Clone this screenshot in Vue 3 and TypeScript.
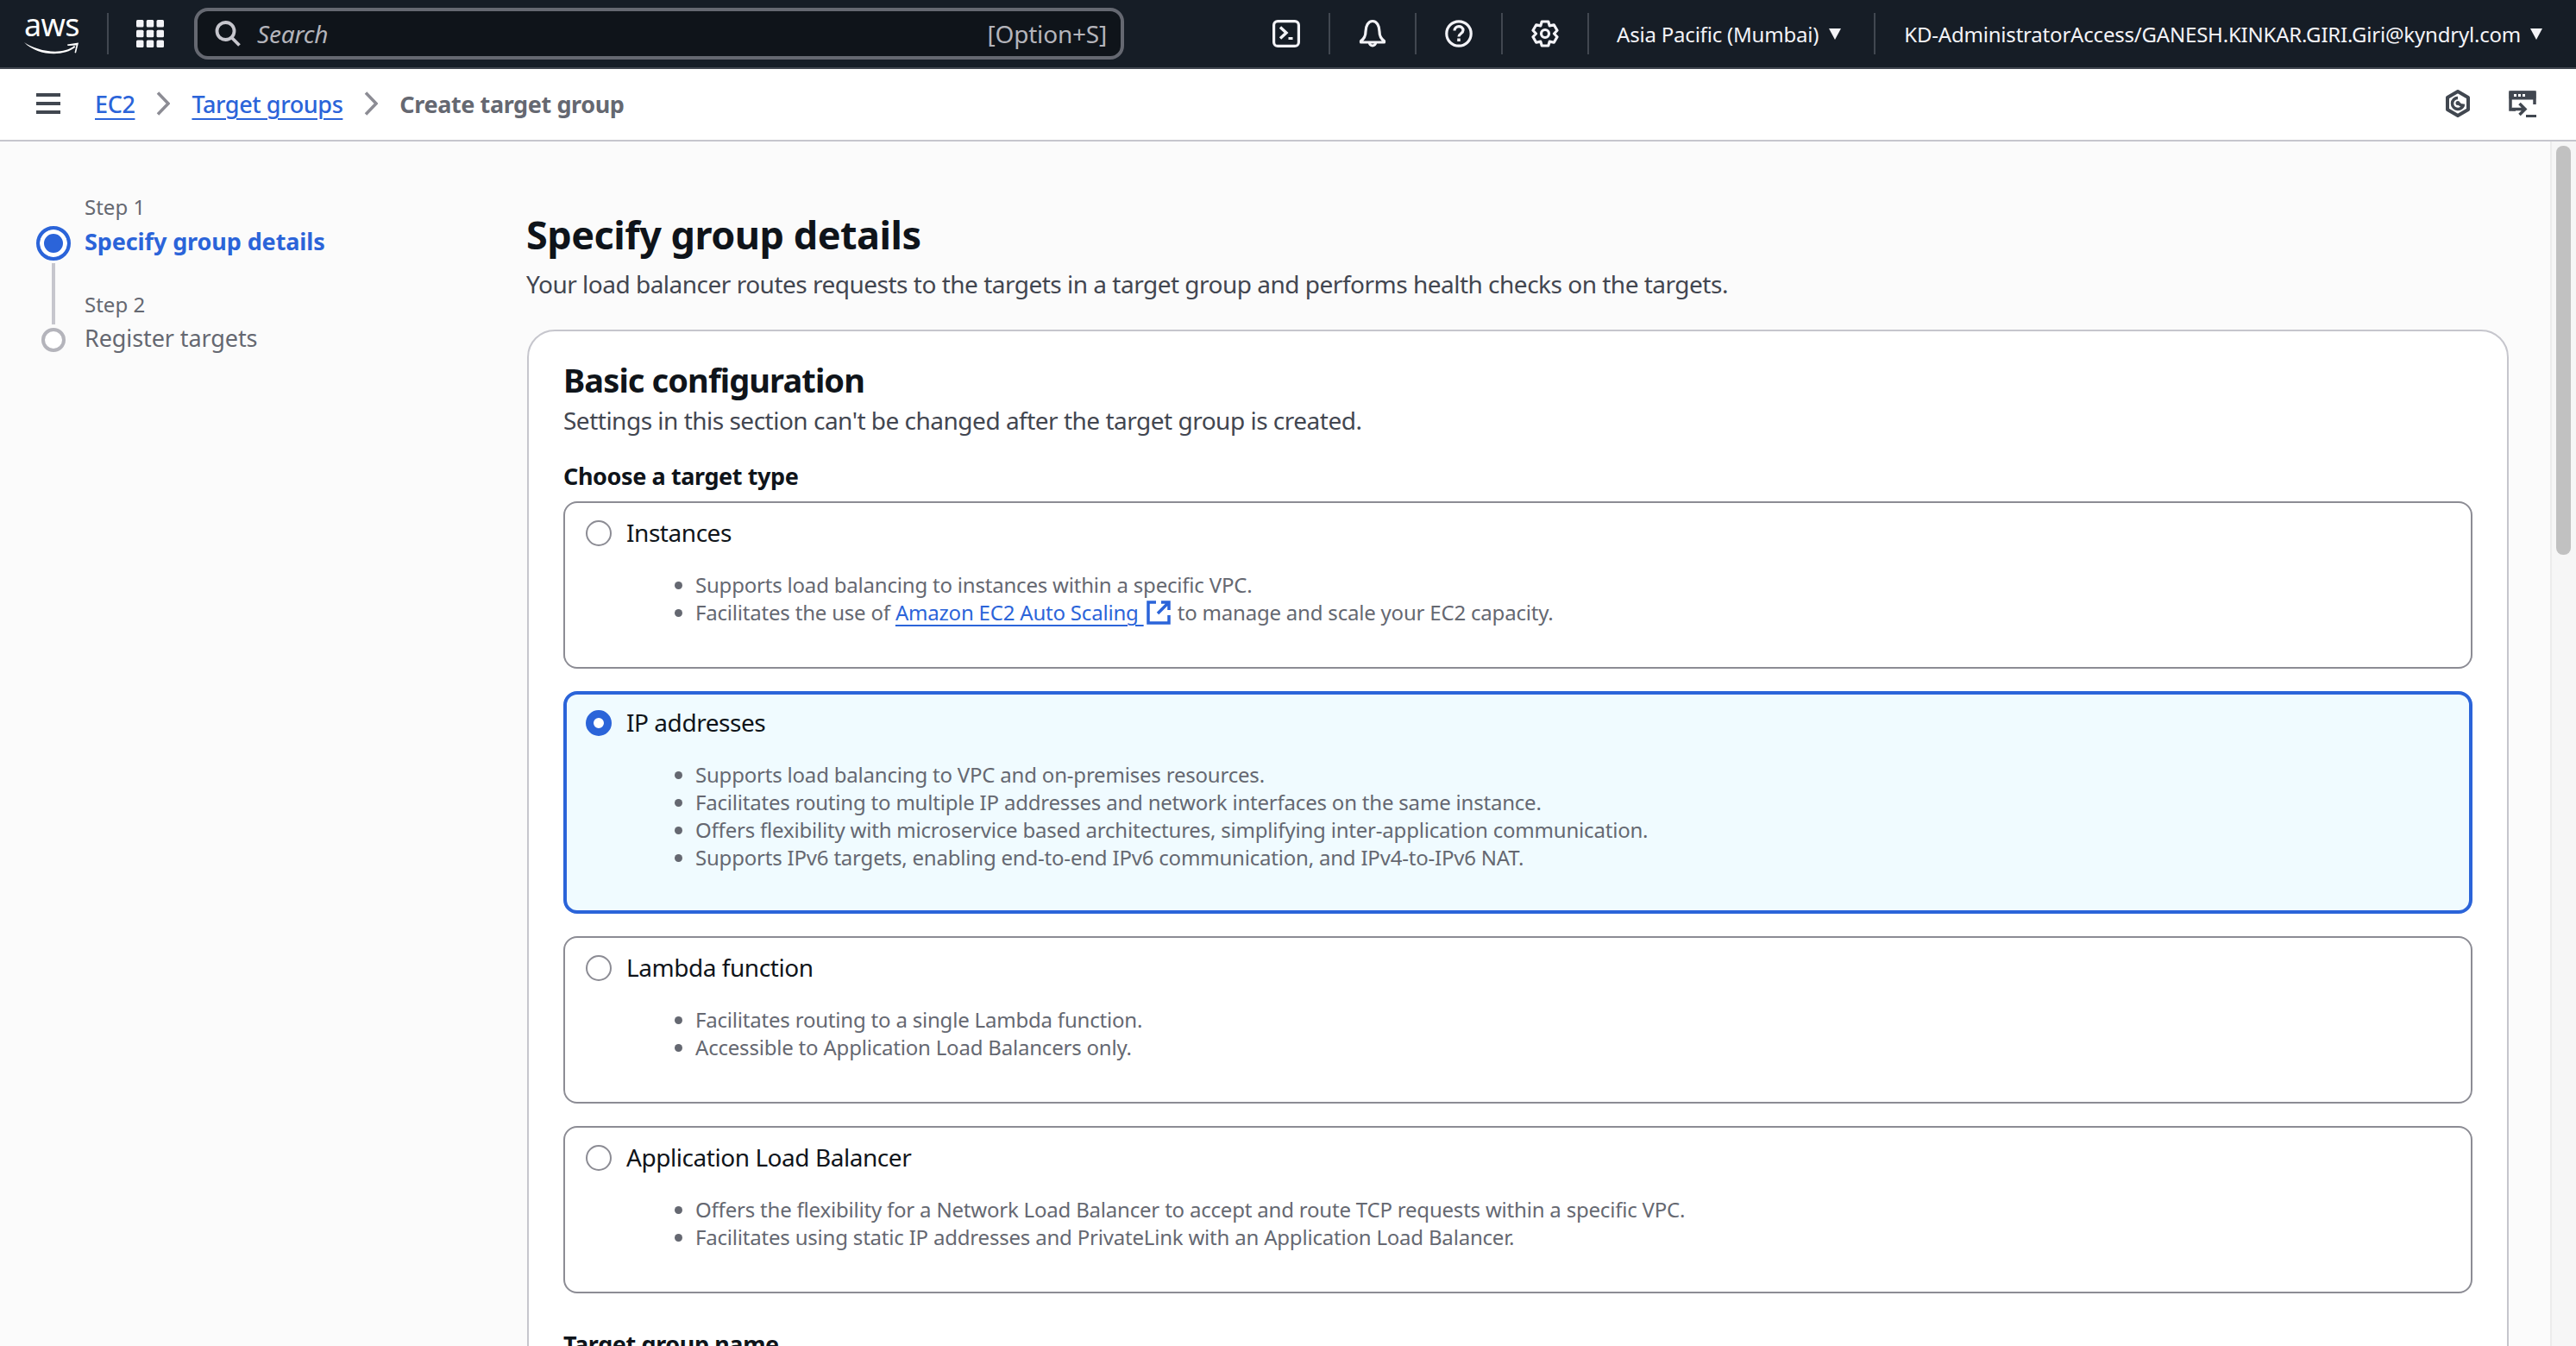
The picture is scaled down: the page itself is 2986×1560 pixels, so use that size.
<script setup lang="ts">
interface Opt { label: string; selected?: boolean; items: string[]; link?: boolean }
const options: Opt[] = [
  { label: 'Instances', link: true, items: ['Supports load balancing to instances within a specific VPC.'] },
  { label: 'IP addresses', selected: true, items: [
    'Supports load balancing to VPC and on-premises resources.',
    'Facilitates routing to multiple IP addresses and network interfaces on the same instance.',
    'Offers flexibility with microservice based architectures, simplifying inter-application communication.',
    'Supports IPv6 targets, enabling end-to-end IPv6 communication, and IPv4-to-IPv6 NAT.' ] },
  { label: 'Lambda function', items: [
    'Facilitates routing to a single Lambda function.',
    'Accessible to Application Load Balancers only.' ] },
  { label: 'Application Load Balancer', items: [
    'Offers the flexibility for a Network Load Balancer to accept and route TCP requests within a specific VPC.',
    'Facilitates using static IP addresses and PrivateLink with an Application Load Balancer.' ] }
]

// Six-lobed settings gear outline
const gearPath = (() => {
  const pts: string[] = []
  for (let k = 0; k < 6; k++) {
    const a = -90 + k * 60
    for (const [d, r] of [[-30, 10.5], [-15, 14.5], [15, 14.5]] as const) {
      const t = ((a + d) * Math.PI) / 180
      pts.push(`${(16 + r * Math.cos(t)).toFixed(2)} ${(16 + r * Math.sin(t)).toFixed(2)}`)
    }
  }
  return 'M' + pts.join('L') + 'Z'
})()
</script>

<template>
  <div class="page">
    <header class="topnav">
      <div class="logo">
        <span class="logo-text">aws</span>
        <svg class="smile" viewBox="0 0 64 16" width="64" height="16"><path d="M0 1C14 11 44 17 58 5l1.500 1.500C46 18 15 17 0 1z" fill="#fff"/><path d="M50 3.500L63 1.500l-3 12-1.500-.5 2-8.500-10 .5z" fill="#fff"/></svg>
      </div>
      <i class="div d1"></i>
      <svg class="grid-ic" width="32" height="32" viewBox="0 0 32 32"><g fill="#f3f3f7"><rect x="0" y="0" width="8.500" height="8.500" rx="1.500"/><rect x="11.750" y="0" width="8.500" height="8.500" rx="1.500"/><rect x="23.500" y="0" width="8.500" height="8.500" rx="1.500"/><rect x="0" y="11.750" width="8.500" height="8.500" rx="1.500"/><rect x="11.750" y="11.750" width="8.500" height="8.500" rx="1.500"/><rect x="23.500" y="11.750" width="8.500" height="8.500" rx="1.500"/><rect x="0" y="23.500" width="8.500" height="8.500" rx="1.500"/><rect x="11.750" y="23.500" width="8.500" height="8.500" rx="1.500"/><rect x="23.500" y="23.500" width="8.500" height="8.500" rx="1.500"/></g></svg>
      <div class="search">
        <svg width="32" height="32" viewBox="0 0 32 32" fill="none" stroke="#c6c6cd" stroke-width="3.800"><circle cx="12.500" cy="13" r="10"/><path d="M19.500 20.500l9 9"/></svg>
        <span class="search-ph">Search</span>
        <span class="search-key">[Option+S]</span>
      </div>
      <div class="nav-right">
        <svg class="ic-term" width="32" height="32" viewBox="0 0 32 32" fill="none" stroke="#f3f3f7" stroke-width="3.200"><rect x="1.600" y="1.600" width="28.800" height="28.800" rx="4.500"/><path d="M9 8.500l7 6.500-7 6.500" stroke-width="3.400"/><path d="M18.500 21.500h5" stroke-width="3"/></svg>
        <i class="div"></i>
        <svg class="ic" width="32" height="34" viewBox="0 0 32 34" fill="none" stroke="#f3f3f7" stroke-width="3.200"><path d="M2.500 25.500c3-2 5.500-5 5.500-11C8 8 11 2.500 16 2.500S24 8 24 14.500c0 6 2.500 9 5.500 11v1.500h-27z" stroke-linejoin="round"/><path d="M12.500 27.500a3.500 3.500 0 0 0 7 0"/></svg>
        <i class="div"></i>
        <svg class="ic" width="32" height="32" viewBox="0 0 32 32" fill="none" stroke="#f3f3f7" stroke-width="3.200"><circle cx="16" cy="16" r="14.200"/><path d="M11 12.500c0-6.500 10-6.500 10-.5 0 4-5 4-5 7.500"/><path d="M16 21.500v3.500" stroke-width="3.600"/></svg>
        <i class="div"></i>
        <svg class="ic" width="32" height="32" viewBox="0 0 32 32" fill="none" stroke="#f3f3f7" stroke-width="3.200" stroke-linejoin="round"><path :d="gearPath"/><circle cx="16" cy="16" r="4.500"/></svg>
        <i class="div"></i>
        <span class="region">Asia Pacific (Mumbai)</span><i class="caret"></i>
        <i class="div"></i>
        <span class="account">KD-AdministratorAccess/GANESH.KINKAR.GIRI.Giri@kyndryl.com</span><i class="caret"></i>
      </div>
    </header>

    <nav class="crumbbar">
      <svg width="28" height="24" viewBox="0 0 28 24" fill="#414750"><rect width="28" height="4"/><rect y="10" width="28" height="4"/><rect y="20" width="28" height="4"/></svg>
      <a class="crumb first">EC2</a>
      <svg class="chev" width="16" height="28" viewBox="0 0 16 28" fill="none" stroke="#8c8c94" stroke-width="3.500"><path d="M2 1.500l12 12.500L2 26.500"/></svg>
      <a class="crumb">Target groups</a>
      <svg class="chev" width="16" height="28" viewBox="0 0 16 28" fill="none" stroke="#8c8c94" stroke-width="3.500"><path d="M2 1.500l12 12.500L2 26.500"/></svg>
      <span class="crumb-cur">Create target group</span>
      <svg class="hex" width="30" height="32" viewBox="0 0 30 32" fill="none" stroke="#414750" stroke-width="4"><path d="M15 2l12 7v14l-12 7-12-7V9z" stroke-linejoin="round"/><path d="M15 9.500a6.500 6.500 0 1 0 6.500 7" stroke-width="3.500"/><path d="M15 15.500l7 4.500" stroke-width="3.500"/><circle cx="15" cy="15.500" r="2.500" fill="#414750" stroke="none"/></svg>
      <svg class="mon" width="32" height="31" viewBox="0 0 32 31" fill="none" stroke="#414750" stroke-width="3.500"><path d="M8 22H2V2h28v14"/><rect x="0.500" y="0.500" width="31" height="10" rx="2" fill="#414750" stroke="none"/><path d="M6 5.500h3M11 5.500h3M16 5.500h3" stroke="#fff" stroke-width="3"/><path d="M4 21.500h15M12.500 15l6.500 6.500-6.500 6.500"/><rect x="20" y="28" width="12" height="3" fill="#414750" stroke="none"/></svg>
    </nav>

    <div class="main">
      <aside class="wizard">
        <div class="dot-cell"></div>
        <div class="step-lbl">Step 1</div>
        <div class="dot-cell center"><span class="dot active"></span></div>
        <div class="step-name active">Specify group details</div>
        <div class="dot-cell center"><span class="conn"></span></div>
        <div class="step-lbl second">Step 2</div>
        <div class="dot-cell center"><span class="dot"></span></div>
        <div class="step-name last">Register targets</div>
      </aside>

      <main class="content">
        <h1>Specify group details</h1>
        <p class="desc">Your load balancer routes requests to the targets in a target group and performs health checks on the targets.</p>

        <section class="card">
          <h2>Basic configuration</h2>
          <p class="sub">Settings in this section can't be changed after the target group is created.</p>
          <div class="field">Choose a target type</div>
          <div class="options">
            <div v-for="o in options" :key="o.label" class="option" :class="{ sel: o.selected }">
              <div class="opt-head">
                <span class="radio" :class="{ on: o.selected }"></span>
                <span class="opt-label">{{ o.label }}</span>
              </div>
              <ul>
                <li v-for="t in o.items" :key="t">{{ t }}</li>
                <li v-if="o.link">Facilitates the use of <a class="ext">Amazon EC2 Auto Scaling <svg width="28" height="28" viewBox="0 0 28 28" fill="none" stroke="#2b64d9" stroke-width="3.500"><path d="M11 2H2v24h24v-9"/><path d="M13 15L25 3M17 2h9v9"/></svg></a> to manage and scale your EC2 capacity.</li>
              </ul>
            </div>
          </div>
          <div class="field name">Target group name</div>
        </section>
      </main>

      <div class="scroll"><div class="thumb"></div></div>
    </div>
  </div>
</template>

<style>
html, body { margin: 0; background: #fbfbfb; }
</style>

<style scoped>
.page { width: 2986px; height: 1560px; overflow: hidden; display: flex; flex-direction: column; font-family: "Noto Sans", sans-serif; font-size: 26px; letter-spacing: -0.2px; color: #0f141a; background: #fbfbfb; }

.topnav { height: 80px; box-sizing: border-box; flex: none; background: #161d26; border-bottom: 2px solid #414750; display: flex; align-items: center; padding-left: 28px; color: #f3f3f7; }
.logo { width: 64px; height: 56px; display: flex; flex-direction: column; align-items: center; }
.logo-text { font-size: 36px; line-height: 37px; color: #fff; letter-spacing: -0.5px; margin-top: -1px; }
.smile { margin-top: 1px; }
.div { width: 2px; height: 48px; background: #414750; display: block; flex: none; }
.d1 { margin-left: 32px; }
.grid-ic { margin-left: 32px; }
.search { margin-left: 35px; width: 1078px; height: 60px; box-sizing: border-box; border: 4px solid #656871; border-radius: 16px; background: #0f141a; display: flex; align-items: center; padding: 0 16px 0 20px; color: #b4b4bb; font-size: 28px; }
.search-ph { font-style: italic; margin-left: 17px; flex: 1; }
.nav-right { margin-left: 172px; display: flex; align-items: center; font-size: 24px; }
.ic { margin: 0 33px; }
.ic-term { margin-right: 33px; }
.region { margin-left: 32px; }
.account { margin-left: 33px; }
.caret { width: 0; height: 0; border: 7.5px solid transparent; border-top: 13px solid #f3f3f7; border-bottom: 0; display: block; margin: 0 38px 0 12px; }
.account + .caret { margin: 0 0 0 11px; }

.crumbbar { height: 84px; box-sizing: border-box; flex: none; background: #fff; border-bottom: 2px solid #c6c6cd; display: flex; align-items: center; padding: 0 46px 2px 42px; font-size: 27px; letter-spacing: -0.4px; }
.crumb { color: #2b64d9; font-weight: 500; text-decoration: underline; text-underline-offset: 6px; text-decoration-thickness: 2px; }
.first { margin-left: 40px; }
.chev { margin: 0 25px; }
.crumb-cur { color: #656871; font-weight: 700; }
.hex { margin-left: auto; }
.mon { margin-left: 44px; }

.main { flex: 1; display: flex; min-height: 0; }
.wizard { width: 611px; flex: none; box-sizing: border-box; padding: 59px 0 0 42px; display: grid; grid-template-columns: 40px 1fr; grid-template-rows: 36px 46px 71px 36px; column-gap: 16px; align-content: start; }
.dot-cell.center { display: flex; justify-content: center; align-items: center; }
.step-lbl { font-size: 24px; line-height: 33px; color: #656871; letter-spacing: 0; }
.step-lbl.second { align-self: end; margin-bottom: 7px; }
.step-name { font-size: 27px; line-height: 42px; color: #656871; letter-spacing: -0.1px; }
.step-name.active { color: #2b64d9; font-weight: 700; }
.step-name.last { line-height: 32px; }
.dot { width: 28px; height: 28px; box-sizing: border-box; border: 4px solid #b4b4bb; border-radius: 50%; background: #fff; display: block; }
.dot.active { width: 40px; height: 40px; border: 4px solid #2b64d9; background: #2b64d9; box-shadow: inset 0 0 0 5px #fff; }
.conn { width: 4px; height: 100%; background: #c6c6cd; display: block; }

.content { flex: 1; min-width: 0; padding: 78px 48px 0 0; }
h1 { margin: 0 0 0 -1px; font-size: 45px; line-height: 60px; font-weight: 700; letter-spacing: -0.5px; }
.desc { margin: 7px 0 0 -1px; line-height: 40px; color: #424650; font-size: 28px; letter-spacing: -0.5px; }
.card { margin-top: 33px; box-sizing: border-box; border: 2px solid #c6c6cd; border-radius: 32px; background: #fff; padding: 32px 40px 200px; }
h2 { margin: 0; font-size: 38px; line-height: 48px; font-weight: 700; letter-spacing: -0.9px; }
.sub { margin: 6px 0 0; line-height: 34px; padding-bottom: 2px; color: #424650; font-size: 28px; letter-spacing: -0.5px; }
.field { margin-top: 28px; font-weight: 700; line-height: 36px; font-size: 27px; letter-spacing: -0.4px; }
.field.name { margin-top: 41px; }
.options { margin-top: 11px; display: flex; flex-direction: column; gap: 26px; }
.option { border: 2px solid #8c8c94; border-radius: 16px; padding: 17px 24px 47px; }
.option.sel { border: 4px solid #2b64d9; background: #f0fbff; padding: 15px 22px 45px; }
.opt-head { display: flex; align-items: center; gap: 17px; height: 36px; }
.radio { width: 30px; height: 30px; box-sizing: border-box; border: 2px solid #8c8c94; border-radius: 50%; background: #fff; display: block; flex: none; }
.radio.on { border: 9px solid #2b64d9; }
.opt-label { font-size: 28px; line-height: 36px; padding-bottom: 3px; letter-spacing: -0.45px; }
ul { margin: 26px 0 0; padding: 0 0 0 127px; font-size: 24px; line-height: 32px; color: #656871; letter-spacing: -0.2px; }
.ext { color: #2b64d9; text-decoration: underline; text-underline-offset: 5px; text-decoration-thickness: 2px; }
.ext svg { vertical-align: -5px; margin: 0 2px 0 3px; }

.scroll { width: 30px; flex: none; box-sizing: border-box; background: #f6f6f6; border-left: 2px solid #ececec; padding: 5px 6px 0 5px; }
.thumb { height: 474px; border-radius: 8px; background: #c1c1c1; }
</style>
